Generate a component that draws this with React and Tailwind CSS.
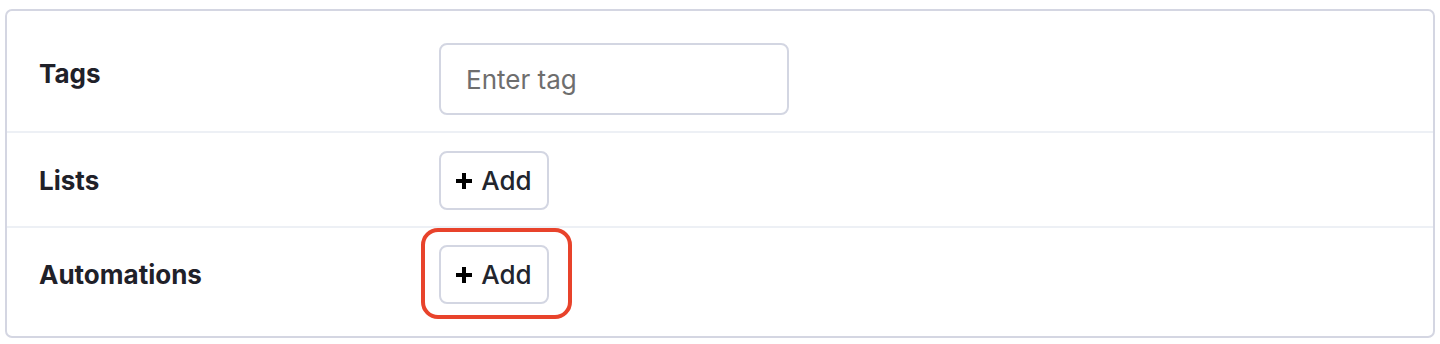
import React from "react";

const PlusIcon = () => (
  <svg width="16" height="16" viewBox="0 0 16 16" className="shrink-0">
    <path d="M8 0v16M0 8h16" stroke="#000" strokeWidth="4" />
  </svg>
);

const AddButton = () => (
  <button
    type="button"
    className="inline-flex h-[59px] w-[110px] items-center justify-center gap-[9px] rounded-[8px] border-2 border-[#d3d6e2] bg-white text-[26px] font-medium text-[#22252d]"
  >
    <PlusIcon />
    <span>Add</span>
  </button>
);

const App = () => {
  return (
    <div
      className="min-h-[344px] bg-white pl-[5px] pt-[9px]"
      style={{ fontFamily: "Inter, 'Noto Sans', sans-serif" }}
    >
      <div className="w-[1430px] overflow-hidden rounded-[7px] border-2 border-[#d4d6e2] bg-white">
        {/* Tags */}
        <div className="flex items-center border-b-2 border-[#edf0f5] pt-[32px] pb-[16px]">
          <div className="mb-[12px] w-[432px] pl-[32px] text-[26px] font-bold text-[#1f2129]">
            Tags
          </div>
          <input
            type="text"
            placeholder="Enter tag"
            className="h-[72px] w-[350px] rounded-[8px] border-2 border-[#d3d6e2] px-[25px] text-[26px] text-[#1f2129] outline-none placeholder:text-[#6e6e6e]"
          />
        </div>

        {/* Lists */}
        <div className="flex items-center border-b-2 border-[#edf0f5] pt-[18px] pb-[16px]">
          <div className="w-[432px] pl-[32px] text-[26px] font-bold text-[#1f2129]">
            Lists
          </div>
          <AddButton />
        </div>

        {/* Automations */}
        <div className="flex items-center pt-[17px] pb-[32px]">
          <div className="w-[432px] pl-[32px] text-[26px] font-bold text-[#1f2129]">
            Automations
          </div>
          <div className="relative">
            <AddButton />
            <span className="pointer-events-none absolute -top-[17px] -bottom-[15px] -left-[18px] -right-[23px] rounded-[17px] border-4 border-[#e8432b]" />
          </div>
        </div>
      </div>
    </div>
  );
};

export default App;
